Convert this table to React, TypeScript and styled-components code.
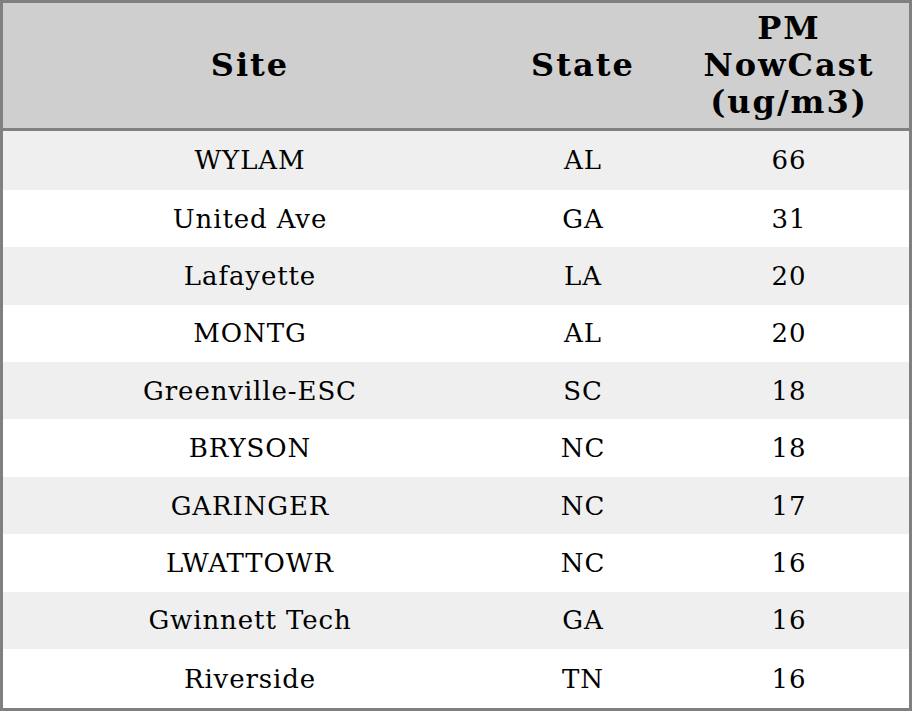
import styled, { createGlobalStyle } from 'styled-components'

const GlobalStyle = createGlobalStyle`
  html, body {
    margin: 0;
    padding: 0;
    background: #ffffff;
  }
  #root {
    height: 711px;
  }
`

const Table = styled.table`
  width: 912px;
  height: 711px;
  border-collapse: collapse;
  border: 3px solid #808080;
  font-family: 'DejaVu Serif', serif;
  color: #000;
`

const HeadCell = styled.th<{ $width: number }>`
  width: ${p => p.$width}px;
  height: 125px;
  background: #cfcfcf;
  border-bottom: 3px solid #808080;
  font-size: 32px;
  font-weight: bold;
  letter-spacing: 2px;
  line-height: 37px;
  text-align: center;
  padding: 0;
`

const Row = styled.tr<{ $odd: boolean }>`
  background: ${p => (p.$odd ? '#efefef' : '#ffffff')};
`

const Cell = styled.td`
  text-align: center;
  font-size: 26px;
  letter-spacing: 0.9px;
  padding: 0;
`

const rows = [
  ['WYLAM', 'AL', '66'],
  ['United Ave', 'GA', '31'],
  ['Lafayette', 'LA', '20'],
  ['MONTG', 'AL', '20'],
  ['Greenville-ESC', 'SC', '18'],
  ['BRYSON', 'NC', '18'],
  ['GARINGER', 'NC', '17'],
  ['LWATTOWR', 'NC', '16'],
  ['Gwinnett Tech', 'GA', '16'],
  ['Riverside', 'TN', '16'],
]

export default function App() {
  return <>
    <GlobalStyle />
    <Table>
      <thead>
        <tr>
          <HeadCell $width={494}>Site</HeadCell>
          <HeadCell $width={172}>State</HeadCell>
          <HeadCell $width={240}>PM<br />NowCast<br />(ug/m3)</HeadCell>
        </tr>
      </thead>
      <tbody>
        {rows.map((r, i) => (
          <Row key={r[0]} $odd={i % 2 === 0}>
            <Cell>{r[0]}</Cell>
            <Cell>{r[1]}</Cell>
            <Cell>{r[2]}</Cell>
          </Row>
        ))}
      </tbody>
    </Table>
  </>
}
